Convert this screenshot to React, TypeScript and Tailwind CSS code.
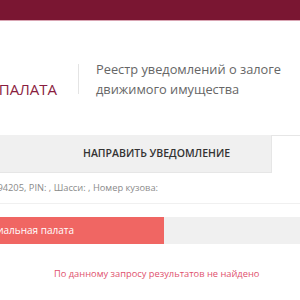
export default function App() {
  return (
    <div className="w-[300px] h-[300px] overflow-hidden bg-white font-['Open_Sans',sans-serif]">
      <div className="h-[20px] bg-[#7a1632]" />
      <div className="h-px bg-[#d9a5b3]" />

      <div className="flex h-[114px] items-center pt-[2px]">
        <div className="flex w-[78px] shrink-0 justify-end overflow-hidden pr-[21px] pt-[20px]">
          <span className="whitespace-nowrap text-[15px] leading-none text-[#8a1d40]">
            НОТАРИАЛЬНАЯ ПАЛАТА
          </span>
        </div>
        <div className="h-[30px] w-px shrink-0 bg-[#e4e4e4]" />
        <div className="whitespace-nowrap pl-[17px] text-[12.8px] leading-[20px] text-[#666]">
          <div>Реестр уведомлений о залоге</div>
          <div>движимого имущества</div>
        </div>
      </div>

      <div className="flex h-[38px]">
        <div className="flex w-[271px] shrink-0 items-center border-b border-[#e6e6e6] bg-[#f0f0f0] pl-[83px]">
          <span className="whitespace-nowrap text-[10.5px] font-semibold text-[#333]">
            НАПРАВИТЬ УВЕДОМЛЕНИЕ
          </span>
        </div>
        <div className="flex-1 border-l border-t border-[#e6e6e6] bg-white" />
      </div>

      <div className="flex h-[31px] items-center border-b border-[#f0f0f0]">
        <div className="flex w-[158px] justify-end overflow-hidden">
          <span className="whitespace-nowrap text-[9.3px] text-[#8a8a8a]">
            VIN: XTA21140094205, PIN: , Шасси: , Номер кузова:
          </span>
        </div>
      </div>

      <div className="mt-[13px] flex h-[27px] bg-[#f0f0f0]">
        <div className="flex w-[164px] items-center bg-[#f06663]">
          <div className="flex w-[74px] justify-end overflow-hidden">
            <span className="whitespace-nowrap text-[10px] text-white">
              Федеральная нотариальная палата
            </span>
          </div>
        </div>
      </div>

      <div className="mt-[23px] whitespace-nowrap pl-[54px] text-[9.3px] text-[#e0506d]">
        По данному запросу результатов не найдено
      </div>
    </div>
  );
}
